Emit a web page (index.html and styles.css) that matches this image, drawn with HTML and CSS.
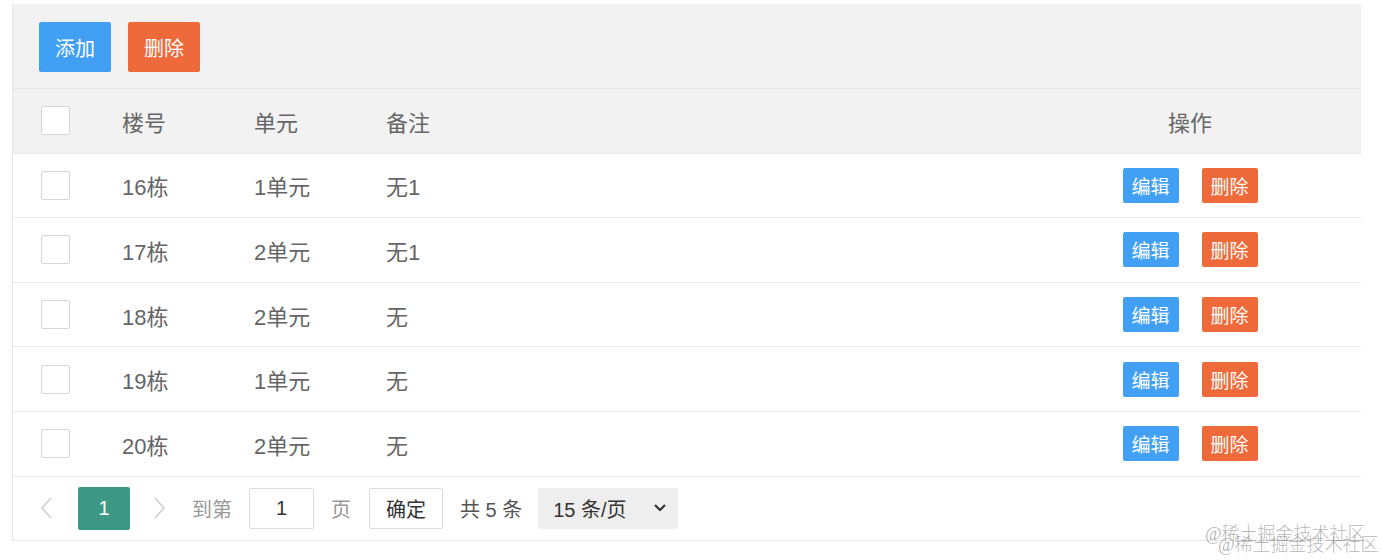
FILE: index.html
```html
<!DOCTYPE html>
<html lang="zh">
<head>
<meta charset="utf-8">
<link rel="stylesheet" href="styles.css">
</head>
<body>
<div class="panel">
  <div class="toolbar">
    <button class="btn btn-blue btn-lg">添加</button>
    <button class="btn btn-orange btn-lg">删除</button>
  </div>
  <div class="row head">
    <div class="cell chk"><span class="box"></span></div>
    <div class="cell">楼号</div>
    <div class="cell">单元</div>
    <div class="cell">备注</div>
    <div class="cell ops">操作</div>
  </div>
  <div class="row">
    <div class="cell chk"><span class="box"></span></div>
    <div class="cell">16栋</div>
    <div class="cell">1单元</div>
    <div class="cell">无1</div>
    <div class="cell ops"><button class="btn btn-blue btn-sm">编辑</button><button class="btn btn-orange btn-sm">删除</button></div>
  </div>
  <div class="row">
    <div class="cell chk"><span class="box"></span></div>
    <div class="cell">17栋</div>
    <div class="cell">2单元</div>
    <div class="cell">无1</div>
    <div class="cell ops"><button class="btn btn-blue btn-sm">编辑</button><button class="btn btn-orange btn-sm">删除</button></div>
  </div>
  <div class="row">
    <div class="cell chk"><span class="box"></span></div>
    <div class="cell">18栋</div>
    <div class="cell">2单元</div>
    <div class="cell">无</div>
    <div class="cell ops"><button class="btn btn-blue btn-sm">编辑</button><button class="btn btn-orange btn-sm">删除</button></div>
  </div>
  <div class="row">
    <div class="cell chk"><span class="box"></span></div>
    <div class="cell">19栋</div>
    <div class="cell">1单元</div>
    <div class="cell">无</div>
    <div class="cell ops"><button class="btn btn-blue btn-sm">编辑</button><button class="btn btn-orange btn-sm">删除</button></div>
  </div>
  <div class="row">
    <div class="cell chk"><span class="box"></span></div>
    <div class="cell">20栋</div>
    <div class="cell">2单元</div>
    <div class="cell">无</div>
    <div class="cell ops"><button class="btn btn-blue btn-sm">编辑</button><button class="btn btn-orange btn-sm">删除</button></div>
  </div>
  <div class="pager">
    <span class="arrow"><svg width="13" height="22" viewBox="0 0 13 22"><path d="M11 1 L2 11 L11 21" fill="none" stroke="#cfcfcf" stroke-width="1.6"/></svg></span>
    <span class="page-cur">1</span>
    <span class="arrow"><svg width="13" height="22" viewBox="0 0 13 22"><path d="M2 1 L11 11 L2 21" fill="none" stroke="#cfcfcf" stroke-width="1.6"/></svg></span>
    <span class="muted">到第</span>
    <span class="page-input">1</span>
    <span class="muted">页</span>
    <span class="ok">确定</span>
    <span class="total">共 5 条</span>
    <span class="size">15 条/页<svg width="14" height="10" viewBox="0 0 14 10"><path d="M2 2 L7 7 L12 2" fill="none" stroke="#333" stroke-width="2.2"/></svg></span>
  </div>
</div>
<div class="wm wm1">@稀土掘金技术社区</div>
<div class="wm wm2">@稀土掘金技术社区</div>
</body>
</html>
```
FILE: styles.css
```css
html, body {
  margin: 0;
  background: #fff;
  font-family: "Liberation Sans", "Noto Sans CJK SC", sans-serif;
}
.panel {
  margin: 4px 0 0 12px;
  width: 1348px;
  border-left: 1px solid #e6e6e6;
  border-bottom: 1px solid #e6e6e6;
}
.toolbar {
  height: 85px;
  box-sizing: border-box;
  padding: 18px 0 0 26px;
  background: #f2f2f2;
  border-bottom: 1px solid #e4e4e4;
  display: flex;
  gap: 17px;
  align-items: flex-start;
}
.btn {
  border: 0;
  color: #fff;
  font-family: "Liberation Sans", "Noto Sans CJK SC", sans-serif;
  border-radius: 2px;
  padding: 0;
  cursor: pointer;
}
.btn-lg {
  width: 72px;
  height: 50px;
  font-size: 20px;
}
.btn-sm {
  width: 56px;
  height: 35px;
  font-size: 19px;
}
.btn-blue { background: #42a0f4; }
.btn-orange { background: #ee6a3a; }
.row {
  display: grid;
  grid-template-columns: 109px 132px 132px 1fr 342px;
  height: 63.6px;
  border-bottom: 1px solid #e8e8e8;
  align-items: center;
  color: #666;
  font-size: 22px;
  background: #fff;
}
.row.head {
  background: #f2f2f2;
}
.cell {
  white-space: nowrap;
}
.chk {
  padding-left: 28px;
  display: flex;
  align-items: center;
}
.box {
  width: 27px;
  height: 27px;
  border: 1px solid #d6d6d6;
  border-radius: 2px;
  background: #fff;
}
.ops {
  display: flex;
  justify-content: center;
  gap: 23px;
}
.pager {
  height: 63px;
  display: flex;
  align-items: center;
  padding-left: 27px;
  background: #fff;
  font-size: 20px;
  color: #666;
}
.arrow {
  display: flex;
  align-items: center;
}
.page-cur {
  margin: 0 23px 0 25px;
  width: 52px;
  height: 43px;
  background: #3d9985;
  color: #fff;
  border-radius: 2px;
  display: flex;
  align-items: center;
  justify-content: center;
  font-size: 20px;
}
.muted {
  color: #999;
}
.arrow + .muted {
  margin-left: 26px;
}
.page-input {
  margin: 0 17px;
  width: 63px;
  height: 39px;
  border: 1px solid #dcdcdc;
  border-radius: 2px;
  display: flex;
  align-items: center;
  justify-content: center;
  color: #333;
}
.ok {
  margin-left: 18px;
  width: 72px;
  height: 39px;
  border: 1px solid #dcdcdc;
  border-radius: 2px;
  display: flex;
  align-items: center;
  justify-content: center;
  color: #333;
}
.total {
  margin-left: 17px;
  color: #555;
  white-space: pre;
}
.size {
  margin-left: 16px;
  width: 140px;
  height: 41px;
  box-sizing: border-box;
  padding: 0 11px 0 15px;
  background: #eeeeee;
  border-radius: 2px;
  display: flex;
  align-items: center;
  justify-content: space-between;
  color: #333;
}
.wm {
  position: absolute;
  font-family: "Liberation Serif", "Noto Sans CJK SC", serif;
  font-size: 18px;
  color: rgba(120, 120, 120, 0.55);
  white-space: nowrap;
  font-weight: 300;
}
.wm1 { left: 1205px; top: 519px; }
.wm2 { left: 1218px; top: 530px; }
```
